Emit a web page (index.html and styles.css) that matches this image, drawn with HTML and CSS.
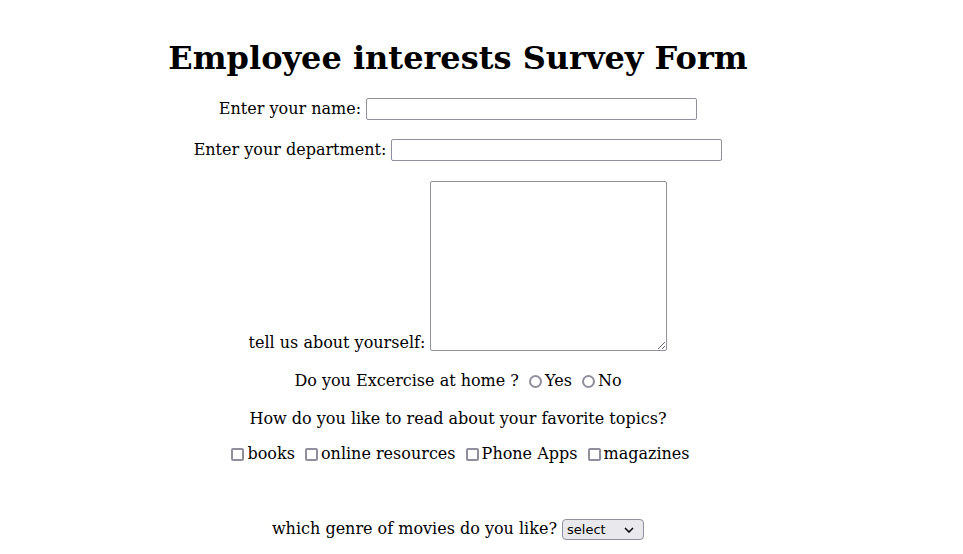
FILE: index.html
```html
<!DOCTYPE html>
<html>
<head>
<meta charset="utf-8">
<title>Survey</title>
<link rel="stylesheet" href="styles.css">
</head>
<body>
<div class="wrap">
  <h1 class="title">Employee interests Survey Form</h1>
  <form class="form">
    <p class="row">Enter your name: <input class="text" type="text"></p>
    <p class="row">Enter your department: <input class="text" type="text"></p>
    <p class="row row-area">tell us about yourself: <textarea class="area"></textarea></p>
    <p class="row row-radio">Do you Excercise at home ? <input class="radio" type="radio" name="ex">Yes <input class="radio" type="radio" name="ex">No</p>
    <p class="row">How do you like to read about your favorite topics?</p>
    <p class="row"><input class="check" type="checkbox">books <input class="check" type="checkbox">online resources <input class="check" type="checkbox">Phone Apps <input class="check" type="checkbox">magazines</p>
    <br>
    <p class="row row-select">which genre of movies do you like? <select class="sel"><option>select</option><option>Action</option><option>Comedy</option><option>Drama</option></select></p>
  </form>
</div>
</body>
</html>
```

FILE: styles.css
```css
body {
  margin: 8px;
  font-family: "DejaVu Serif", serif;
  font-size: 16px;
  color: #000;
  background: #fff;
}
.wrap {
  width: 900px;
  text-align: center;
}
.title {
  font-size: 32px;
  margin: 31px 0 21px;
}
.row {
  margin: 16px 0;
}
.row-area {
  margin-top: 17px;
}
.row-radio {
  margin-top: 19px;
  padding-bottom: 3px;
}
.row-select {
  margin-top: 21px;
}
.text {
  box-sizing: border-box;
  width: 331px;
  height: 22px;
  border: 1px solid #8f8f9d;
  border-radius: 2px;
  padding: 1px 2px;
  margin: 0 0 3px 0;
  background: #fff;
}
.area {
  box-sizing: border-box;
  width: 237px;
  height: 170px;
  border: 1px solid #8f8f9d;
  border-radius: 2px;
  vertical-align: -3px;
  margin: 0;
}
.radio,
.check {
  appearance: none;
  -webkit-appearance: none;
  box-sizing: border-box;
  width: 13px;
  height: 13px;
  border: 2px solid #8f8f9d;
  background: #fff;
}
.radio {
  border-radius: 50%;
  margin: 3px 3px 0 5px;
  vertical-align: -2px;
}
.check {
  border-radius: 2px;
  margin: 3px 3px 0 5px;
  vertical-align: -2px;
}
.sel {
  appearance: none;
  -webkit-appearance: none;
  box-sizing: border-box;
  width: 82px;
  height: 21px;
  border: 1px solid #8f8f9d;
  border-radius: 4px;
  background-color: #e9e9ed;
  background-image: url("data:image/svg+xml;utf8,<svg xmlns='http://www.w3.org/2000/svg' width='10' height='6'><path d='M1 1l4 4 4-4' fill='none' stroke='black' stroke-width='1.5'/></svg>");
  background-repeat: no-repeat;
  background-position: right 9px center;
  font-family: "DejaVu Sans", sans-serif;
  font-size: 13px;
  color: #000;
  padding: 0 4px;
  margin: 0 0 6px;
}
```
